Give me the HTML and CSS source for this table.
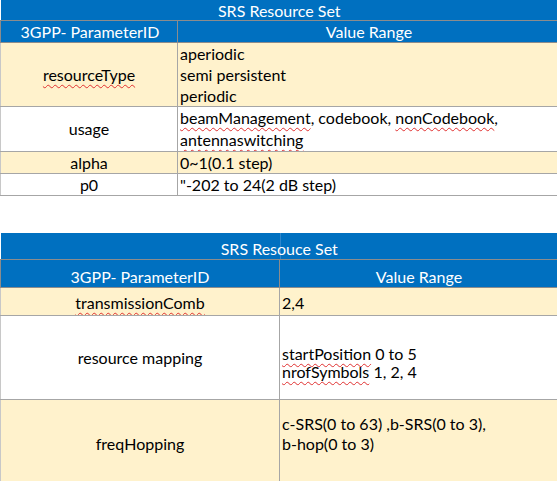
FILE: index.html
```html
<!DOCTYPE html>
<html>
<head>
<meta charset="utf-8">
<link rel="stylesheet" href="styles.css">
</head>
<body>
<table class="srs top">
  <colgroup><col class="c1"><col class="c2"></colgroup>
  <tr class="title"><th colspan="2">SRS Resource Set</th></tr>
  <tr class="head"><th>3GPP- ParameterID</th><th>Value Range</th></tr>
  <tr class="alt rt"><td class="name"><span class="sp">resourceType</span></td><td class="val">aperiodic<br>semi persistent<br>periodic</td></tr>
  <tr class="us"><td class="name">usage</td><td class="val"><span class="sp">beamManagement</span>, codebook, <span class="sp">nonCodebook</span>,<br><span class="sp">antennaswitching</span></td></tr>
  <tr class="alt one"><td class="name">alpha</td><td class="val">0~1(0.1 step)</td></tr>
  <tr class="one last"><td class="name">p0</td><td class="val">"-202 to 24(2 dB step)</td></tr>
</table>

<table class="srs bottom">
  <colgroup><col class="d1"><col class="d2"></colgroup>
  <tr class="title"><th colspan="2">SRS Resouce Set</th></tr>
  <tr class="head"><th>3GPP- ParameterID</th><th>Value Range</th></tr>
  <tr class="alt tc"><td class="name"><span class="sp">transmissionComb</span></td><td class="val">2,4</td></tr>
  <tr class="rm"><td class="name">resource mapping</td><td class="val"><span class="sp">startPosition</span> 0 to 5<br><span class="sp">nrofSymbols</span> 1, 2, 4</td></tr>
  <tr class="alt fh"><td class="name">freqHopping</td><td class="val fhv">c-SRS(0 to 63) ,b-SRS(0 to 3),<br>b-hop(0 to 3)</td></tr>
</table>
</body>
</html>
```

FILE: styles.css
```css
html, body {
  margin: 0;
  padding: 0;
  background: #ffffff;
}
body {
  font-family: Lato, "Open Sans", sans-serif;
  font-size: 16px;
  color: #000000;
  width: 557px;
  height: 481px;
  overflow: hidden;
}
.srs {
  border-collapse: collapse;
  table-layout: fixed;
  width: 558px;
}
.srs th, .srs td {
  padding: 0 0 0 2px;
  border: 1px solid #a6a6a6;
  line-height: 21px;
  white-space: nowrap;
  overflow: hidden;
}
.srs th {
  background: #0070c0;
  color: #ffffff;
  font-weight: normal;
  text-align: center;
  border-color: #8c8c8c;
}
.srs .name {
  text-align: center;
  vertical-align: middle;
  padding-left: 0;
}
.srs .val {
  text-align: left;
  vertical-align: middle;
}
.srs tr.alt td {
  background: #fff2cc;
}
.srs td:first-child {
  border-left-color: #c8c8c8;
}
.sp {
  text-decoration: underline wavy #e03030;
  text-decoration-thickness: 1px;
  text-underline-offset: 3px;
  text-decoration-skip-ink: none;
}

/* top table */
.top .c1 { width: 177px; }
.top .c2 { width: 381px; }
.top tr.title th {
  height: 19px;
  border-top: none;
  border-left: none;
  padding: 1px 0 0 0;
  line-height: 19px;
}
.top tr.head th {
  height: 20px;
  padding-top: 1px;
  line-height: 20px;
}
.top tr.rt td { height: 63px; }
.top tr.us td { height: 41px; line-height: 22px; }
.top tr.one td { height: 21px; }

/* bottom table */
.bottom {
  margin-top: 37px;
}
.bottom .d1 { width: 279px; }
.bottom .d2 { width: 279px; }
.bottom th, .bottom td {
  line-height: 20px;
}
.bottom tr.title th {
  height: 26px;
  vertical-align: bottom;
  border-top: none;
  border-left: none;
  padding: 0;
  background: linear-gradient(to right, #0070c0 0, #0070c0 279px, #2f86cc 279px, #2f86cc 280px, #0070c0 280px);
}
.bottom tr.head th {
  height: 27px;
  vertical-align: bottom;
  padding: 0;
}
.bottom tr.tc td { height: 25px; vertical-align: bottom; padding-bottom: 2px; }
.bottom tr.rm td { height: 83px; }
.bottom tr.rm td.val { line-height: 18px; padding-top: 10px; height: 73px; }
.bottom tr.fh td { height: 88px; }
.bottom tr.fh td.fhv { padding-bottom: 20px; height: 68px; }
```
